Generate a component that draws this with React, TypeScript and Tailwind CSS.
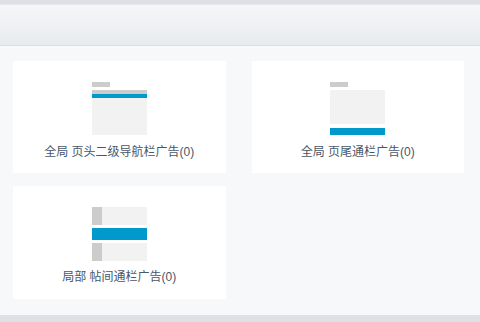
export default function App() {
  return (
    <div className="w-[480px] h-[322px] flex flex-col bg-[#f7f8fa] overflow-hidden" style={{ fontFamily: '"Liberation Sans", "Noto Sans CJK SC", sans-serif' }}>
      {/* Top strip */}
      <div className="h-[5px] bg-[#dde0e4] border-b border-[#e6e8eb]" />
      {/* Header band */}
      <div className="h-[41px] bg-gradient-to-b from-[#f5f6f8] to-[#e8ebee] border-b border-[#dcdfe3]" />

      {/* Cards */}
      <div className="flex-1 pl-[13px] pr-[16px] pt-[15px] grid grid-cols-2 gap-x-[26px] gap-y-[13px] content-start">
        <div className="h-[112px] bg-white flex flex-col items-center">
          <div className="mt-[21px] w-[55px] h-[53px] flex flex-col">
            <div className="w-[18px] h-[5px] bg-[#cccccc]" />
            <div className="mt-[3px] h-[4px] bg-[#cccccc]" />
            <div className="h-[4px] bg-[#0099cc]" />
            <div className="flex-1 bg-[#f2f2f2]" />
          </div>
          <div className="mt-[9px] text-[12px] leading-[16px] text-[#48576a]">全局 页头二级导航栏广告(0)</div>
        </div>

        <div className="h-[112px] bg-white flex flex-col items-center">
          <div className="mt-[21px] w-[55px] h-[53px] flex flex-col">
            <div className="w-[18px] h-[5px] bg-[#cccccc]" />
            <div className="mt-[3px] h-[34px] bg-[#f2f2f2]" />
            <div className="mt-[4px] flex-1 bg-[#0099cc]" />
          </div>
          <div className="mt-[9px] text-[12px] leading-[16px] text-[#48576a]">全局 页尾通栏广告(0)</div>
        </div>

        <div className="h-[113px] bg-white flex flex-col items-center">
          <div className="mt-[21px] w-[55px] h-[54px] flex flex-col">
            <div className="h-[18px] flex">
              <div className="w-[10px] bg-[#cccccc]" />
              <div className="flex-1 bg-[#f2f2f2]" />
            </div>
            <div className="mt-[3px] h-[12px] bg-[#0099cc]" />
            <div className="mt-[3px] h-[18px] flex">
              <div className="w-[10px] bg-[#cccccc]" />
              <div className="flex-1 bg-[#f2f2f2]" />
            </div>
          </div>
          <div className="mt-[8px] text-[12px] leading-[16px] text-[#48576a]">局部 帖间通栏广告(0)</div>
        </div>
      </div>

      {/* Bottom strip */}
      <div className="h-[7px] bg-[#dde0e4]" />
    </div>
  );
}
